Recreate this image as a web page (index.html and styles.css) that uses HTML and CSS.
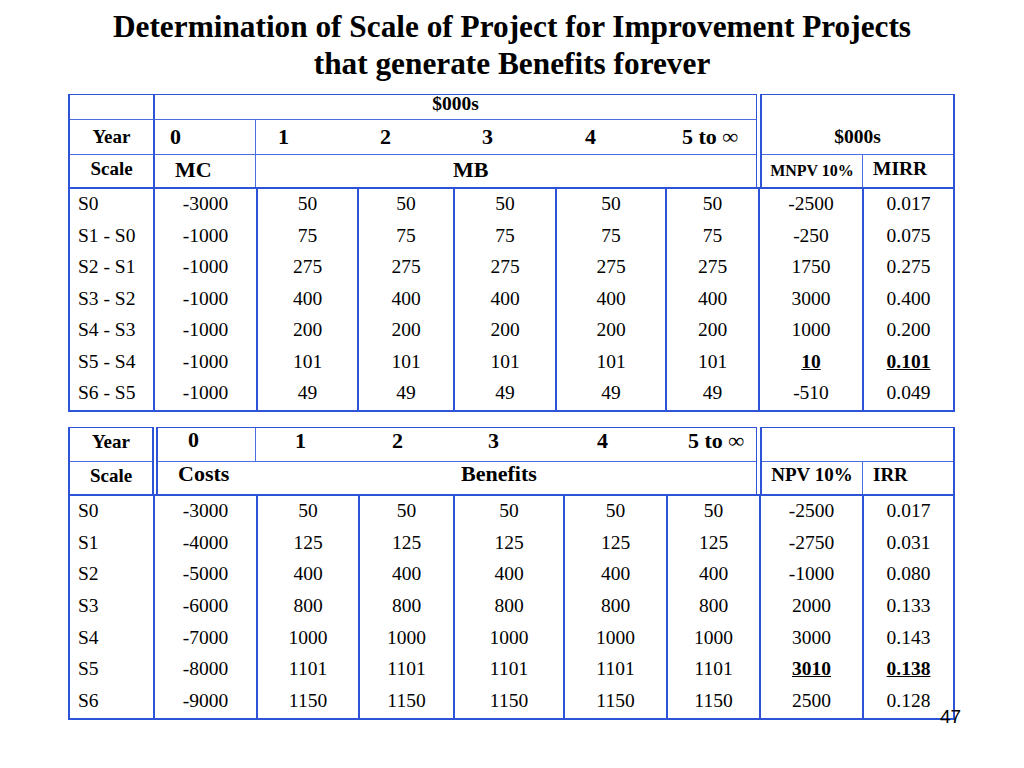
FILE: index.html
```html
<!DOCTYPE html>
<html lang="en">
<head>
<meta charset="utf-8">
<title>Determination of Scale of Project</title>
<link rel="stylesheet" href="styles.css">
</head>
<body>
<div class="slide">
  <h1 class="title">Determination of Scale of Project for Improvement Projects<br>that generate Benefits forever</h1>

  <section class="block b1">
    <div class="head">
      <div class="hl1">
        <div class="c"></div>
        <div class="c units span2 bl2">$000s</div>
        <div class="c bt lab">Year</div>
        <div class="c bt bl2 yr0">0</div>
        <div class="c bt bl1 years"><span>1</span><span>2</span><span>3</span><span>4</span><span>5 to ∞</span></div>
        <div class="c bt lab lab-s">Scale</div>
        <div class="c bt bl2 mc">MC</div>
        <div class="c bt bl1 mb">MB</div>
      </div>
      <div class="hr1">
        <div class="c span2 units-r">$000s</div>
        <div class="c bt mnpv">MNPV 10%</div>
        <div class="c bt bl1 mirr">MIRR</div>
      </div>
    </div>
    <div class="data d1">
      <div>S0</div><div>-3000</div><div>50</div><div>50</div><div>50</div><div>50</div><div>50</div><div>-2500</div><div>0.017</div>
      <div>S1 - S0</div><div>-1000</div><div>75</div><div>75</div><div>75</div><div>75</div><div>75</div><div>-250</div><div>0.075</div>
      <div>S2 - S1</div><div>-1000</div><div>275</div><div>275</div><div>275</div><div>275</div><div>275</div><div>1750</div><div>0.275</div>
      <div>S3 - S2</div><div>-1000</div><div>400</div><div>400</div><div>400</div><div>400</div><div>400</div><div>3000</div><div>0.400</div>
      <div>S4 - S3</div><div>-1000</div><div>200</div><div>200</div><div>200</div><div>200</div><div>200</div><div>1000</div><div>0.200</div>
      <div>S5 - S4</div><div>-1000</div><div>101</div><div>101</div><div>101</div><div>101</div><div>101</div><div><b class="hi">10</b></div><div><b class="hi">0.101</b></div>
      <div>S6 - S5</div><div>-1000</div><div>49</div><div>49</div><div>49</div><div>49</div><div>49</div><div>-510</div><div>0.049</div>
    </div>
  </section>

  <section class="block b2">
    <div class="head head2">
      <div class="hs">
        <div class="c lab lab-y2">Year</div>
        <div class="c bt lab lab-s2">Scale</div>
      </div>
      <div class="hm2">
        <div class="c yr0b">0</div>
        <div class="c bl1 years2"><span>1</span><span>2</span><span>3</span><span>4</span><span>5 to ∞</span></div>
        <div class="c bt costs">Costs</div>
        <div class="c bt benefits">Benefits</div>
      </div>
      <div class="hr2">
        <div class="c span2"></div>
        <div class="c bt npv">NPV 10%</div>
        <div class="c bt bl1 irr">IRR</div>
      </div>
    </div>
    <div class="data d2">
      <div>S0</div><div>-3000</div><div>50</div><div>50</div><div>50</div><div>50</div><div>50</div><div>-2500</div><div>0.017</div>
      <div>S1</div><div>-4000</div><div>125</div><div>125</div><div>125</div><div>125</div><div>125</div><div>-2750</div><div>0.031</div>
      <div>S2</div><div>-5000</div><div>400</div><div>400</div><div>400</div><div>400</div><div>400</div><div>-1000</div><div>0.080</div>
      <div>S3</div><div>-6000</div><div>800</div><div>800</div><div>800</div><div>800</div><div>800</div><div>2000</div><div>0.133</div>
      <div>S4</div><div>-7000</div><div>1000</div><div>1000</div><div>1000</div><div>1000</div><div>1000</div><div>3000</div><div>0.143</div>
      <div>S5</div><div>-8000</div><div>1101</div><div>1101</div><div>1101</div><div>1101</div><div>1101</div><div><b class="hi">3010</b></div><div><b class="hi">0.138</b></div>
      <div>S6</div><div>-9000</div><div>1150</div><div>1150</div><div>1150</div><div>1150</div><div>1150</div><div>2500</div><div>0.128</div>
    </div>
  </section>

  <div class="page-num">47</div>
</div>
</body>
</html>
```

FILE: styles.css
```css
* { box-sizing: border-box; }
html, body { margin: 0; padding: 0; background: #fff; }
body {
  width: 1024px;
  height: 768px;
  overflow: hidden;
  font-family: "Liberation Serif", "Times New Roman", serif;
  color: #000;
}
.slide {
  position: relative;
  width: 1024px;
  height: 768px;
  padding-left: 68px;
  --b: #2d54d6;
  --b1: #4a6ee0;
}
.title {
  margin: 0 0 0 -68px;
  padding-top: 7.5px;
  width: 1024px;
  text-align: center;
  font-size: 31.3px;
  line-height: 37px;
  font-weight: bold;
}
.block { width: 887px; }
.b1 { margin-top: 12.5px; }
.b2 { margin-top: 15px; }

.head { display: flex; gap: 3px; }
.c {
  display: flex;
  align-items: center;
  font-weight: bold;
  white-space: nowrap;
}
.bt { border-top: 1px solid var(--b1); }
.bl1 { border-left: 1px solid var(--b1); }
.bl2 { border-left: 2px solid var(--b); }
.span2 { grid-column: span 2; }

/* block 1 header */
.hl1 {
  width: 689px;
  display: grid;
  grid-template-columns: 83px 102px 501px;
  grid-template-rows: 24px 35px 33px;
  border-style: solid;
  border-color: var(--b);
  border-width: 1px 1px 0 2px;
}
.units { justify-content: center; font-size: 19.5px; padding-bottom: 6px; }
.lab { justify-content: center; font-size: 19px; }
.lab-s { padding-bottom: 4px; }
.yr0 { font-size: 22px; padding-left: 15px; }
.years { font-size: 22px; padding-left: 22px; display: grid; grid-template-columns: 102px 102px 103px 97px auto; align-items: center; }
.mc { font-size: 22px; padding-left: 20px; padding-bottom: 2px; }
.mb { font-size: 22px; padding-left: 197px; padding-bottom: 2px; }

.hr1 {
  width: 195px;
  display: grid;
  grid-template-columns: 100px 91px;
  grid-template-rows: 59px 33px;
  border-style: solid;
  border-color: var(--b);
  border-width: 1px 2px 0 2px;
}
.units-r { justify-content: center; font-size: 19.5px; padding-top: 25px; }
.mnpv { justify-content: center; font-size: 16px; }
.mirr { font-size: 19.5px; padding-left: 10px; padding-bottom: 4px; }

/* data tables */
.data {
  display: grid;
  border: 2px solid var(--b);
  font-size: 19.5px;
}
.d1 {
  grid-template-columns: 83px 103px 101px 96px 102px 110px 93px 104px 91px;
  grid-auto-rows: 31.57px;
}
.d2 {
  grid-template-columns: 83px 103px 102px 95px 110px 103px 93px 103px 91px;
  grid-auto-rows: 31.71px;
}
.data > div {
  border-left: 2px solid var(--b);
  text-align: center;
  line-height: 29px;
  white-space: nowrap;
}
.data > div:nth-child(9n+1) {
  border-left: 0;
  text-align: left;
  padding-left: 8px;
}
.hi { text-decoration: underline; }

/* block 2 header */
.head2 { gap: 2px; }
.hs {
  width: 86px;
  display: grid;
  grid-template-rows: 33px 33px;
  border-style: solid;
  border-color: var(--b);
  border-width: 1px 2px 0 2px;
}
.lab-y2 { padding-bottom: 5px; }
.lab-s2 { padding-bottom: 3px; }
.hm2 {
  width: 601px;
  display: grid;
  grid-template-columns: 97px 501px;
  grid-template-rows: 33px 33px;
  border-style: solid;
  border-color: var(--b);
  border-width: 1px 1px 0 2px;
}
.yr0b { font-size: 22px; padding-left: 30px; padding-bottom: 9px; }
.years2 { font-size: 22px; padding-left: 39px; padding-bottom: 9px; display: grid; grid-template-columns: 97px 96px 109px 91px auto; align-items: center; }
.costs { font-size: 22px; padding-left: 20px; padding-bottom: 7px; }
.benefits { font-size: 22px; padding-left: 206px; padding-bottom: 7px; }
.hr2 {
  width: 195px;
  margin-left: 1px;
  display: grid;
  grid-template-columns: 100px 91px;
  grid-template-rows: 33px 33px;
  border-style: solid;
  border-color: var(--b);
  border-width: 1px 2px 0 2px;
}
.npv { justify-content: center; font-size: 19px; padding-bottom: 5px; }
.irr { font-size: 19px; padding-left: 10px; padding-bottom: 5px; }

.page-num {
  position: absolute;
  left: 940px;
  top: 707px;
  font-family: "Liberation Sans", Arial, sans-serif;
  font-size: 19px;
  line-height: 20px;
}
```
